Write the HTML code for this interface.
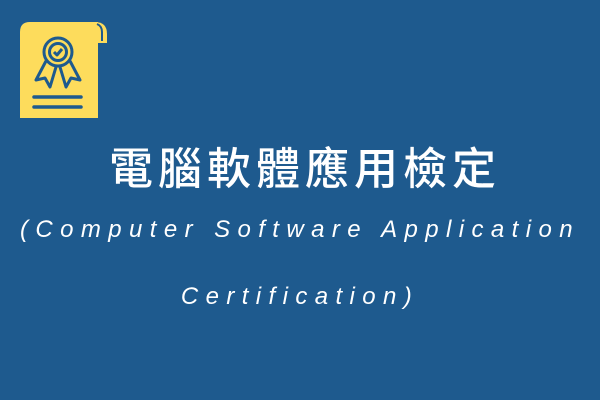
<!DOCTYPE html>
<html><head><meta charset="utf-8"><style>
html,body{margin:0;padding:0}
body{width:600px;height:400px;background:#1e5a8e;position:relative;overflow:hidden;font-family:"Liberation Sans","Noto Sans CJK TC",sans-serif;color:#fff}
.t{position:absolute;left:0;width:600px;text-align:center;white-space:nowrap}
#zh{top:133px;font-size:44px;letter-spacing:5px;font-family:"Noto Sans CJK TC","WenQuanYi Zen Hei",sans-serif;font-weight:500;padding-left:5px}
.en{font-size:24px;font-style:italic;letter-spacing:7.4px}
#e1{top:216px}
#e2{top:283px}
</style></head><body>
<svg style="position:absolute;left:0;top:0" width="130" height="130" viewBox="0 0 130 130">
 <path d="M95 22 Q107 22 107 34 L107 43 L97 43 Z" fill="#fddc5c"/>
 <path d="M30 22 L98 22 L98 118 L20 118 L20 32 Q20 22 30 22 Z" fill="#fddc5c"/>
 <path d="M97 24 Q102 26 102 32 L102 41" stroke="#1e5a8e" stroke-width="2" fill="none"/>
 <g stroke="#1e5a8e" stroke-width="3" fill="none" stroke-linejoin="round">
  <circle cx="58" cy="52" r="14"/>
  <circle cx="58" cy="52" r="8.5"/>
  <path d="M54 52 L57 55 L62 49"/>
  <path d="M46 61 L36 80 L45 78 L50 87 L56 67"/>
  <path d="M70 61 L80 80 L71 78 L66 87 L60 67"/>
 </g>
 <path d="M34 97 L81 97 M34 107 L81 107" stroke="#1e5a8e" stroke-width="3.5" stroke-linecap="round"/>
</svg>
<div class="t" id="zh">電腦軟體應用檢定</div>
<div class="t en" id="e1">(Computer Software Application</div>
<div class="t en" id="e2">Certification)</div>
</body></html>
